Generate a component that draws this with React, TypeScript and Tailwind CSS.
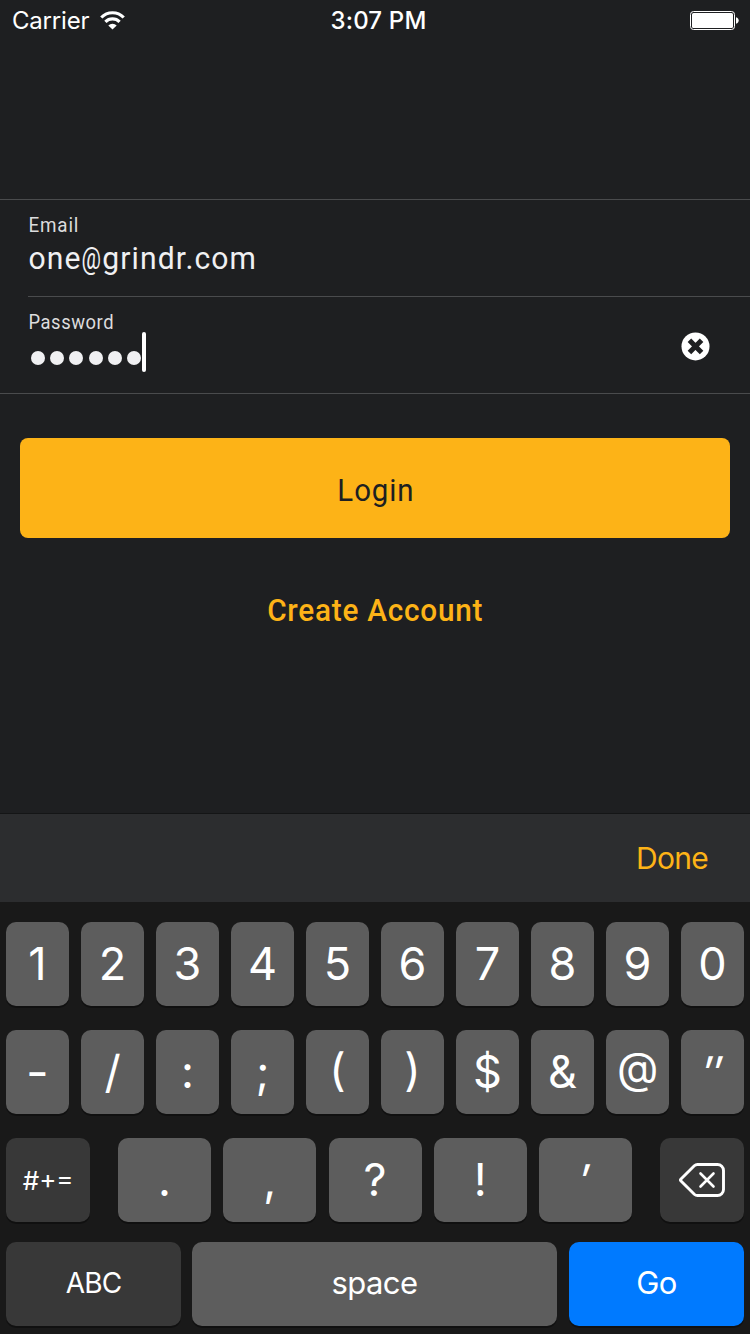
import React from "react";

type KeyProps = {
  children: React.ReactNode;
  box: string;
  glyph?: string;
};

function Key({ children, box, glyph = "" }: KeyProps) {
  return (
    <button
      type="button"
      className={`flex h-[84px] shrink-0 items-center justify-center rounded-[10px] text-white shadow-[0_2px_0_#101010] ${box}`}
    >
      <span className={`block whitespace-pre ${glyph}`}>{children}</span>
    </button>
  );
}

const LIGHT = "bg-[#5d5d5d]";
const DARK = "bg-[#383838]";
const CHAR = "text-[45px] leading-[84px]";
const RAISED = "[font-feature-settings:'case']";

const digits = ["1", "2", "3", "4", "5", "6", "7", "8", "9", "0"];

const symbols = [
  { char: "-", style: "scale-x-110" },
  { char: "/", style: RAISED },
  { char: ":", style: "" },
  { char: ";", style: "" },
  { char: "(", style: RAISED },
  { char: ")", style: RAISED },
  { char: "$", style: "" },
  { char: "&", style: "" },
  { char: "@", style: `scale-95 pt-px ${RAISED}` },
  { char: "″", style: "-skew-x-8 pt-px" },
];

function WifiIcon() {
  return (
    <svg width="25" height="19" viewBox="0 0 25 19" fill="none" stroke="#fff" strokeWidth="3.2">
      <path d="M1.3 6.5A15.6 15.6 0 0 1 23.7 6.5" />
      <path d="M5.4 10.9A10 10 0 0 1 19.6 10.9" />
      <path d="M8.3 14.4A6 6 0 0 1 16.7 14.4L12.5 18.6Z" fill="#fff" stroke="none" />
    </svg>
  );
}

function BatteryIcon() {
  return (
    <svg width="49" height="19" viewBox="0 0 49 19">
      <rect x="0.5" y="0.5" width="44" height="18" rx="3" fill="none" stroke="#fff" />
      <rect x="2" y="2" width="41" height="15" rx="1.5" fill="#fff" />
      <path d="M46 6.2C49.6 7.2 49.6 11.8 46 12.8Z" fill="#fff" />
    </svg>
  );
}

function ClearIcon() {
  return (
    <svg width="30" height="30" viewBox="0 0 30 30">
      <circle cx="14.5" cy="14.4" r="14" fill="#fff" />
      <path d="M10.2 10.1L18.8 18.7M18.8 10.1L10.2 18.7" stroke="#1e1f21" strokeWidth="5" strokeLinecap="square" />
    </svg>
  );
}

function BackspaceIcon() {
  return (
    <svg width="46" height="34" viewBox="0 0 46 34" fill="none" stroke="#fff" strokeLinecap="round" strokeLinejoin="round">
      <path
        d="M18.5 1.5H38.5A6 6 0 0 1 44.5 7.5V26.5A6 6 0 0 1 38.5 32.5H18.5Q16.7 32.5 15.3 31.2L2 18Q1 17 2 16L15.3 2.8Q16.7 1.5 18.5 1.5Z"
        strokeWidth="2.9"
      />
      <path d="M21.5 10.5L34.5 23.5M34.5 10.5L21.5 23.5" strokeWidth="2.6" />
    </svg>
  );
}

export default function App() {
  return (
    <div className="flex h-[1334px] w-[750px] flex-col overflow-hidden bg-[#1e1f21] font-['Inter',sans-serif]">
      <header className="grid h-10 grid-cols-3 grid-rows-[40px] items-center text-[24px] leading-[38px] text-white">
        <div className="flex items-center gap-[11px] pl-3">
          <span className="pt-[2px] tracking-[-0.2px]">Carrier</span>
          <WifiIcon />
        </div>
        <div className="pt-[2px] pl-[7px] text-center font-medium tracking-[0.2px]">3:07 PM</div>
        <div className="flex justify-end pr-[11px]">
          <BatteryIcon />
        </div>
      </header>

      <section className="mt-[159px] h-[195px] border-y border-[#4a4b4d] font-['Roboto',sans-serif] text-[#f0f0f2]">
        <div className="ml-7 h-[97px] border-b border-[#4a4b4d] pt-[13px]">
          <div className="w-fit origin-left scale-x-94 pl-[0.5px] text-[20px] leading-6 tracking-[0.9px] text-[#dcdcde]">Email</div>
          <div className="w-fit origin-left scale-x-94 pl-[0.5px] text-[32px] leading-[42px] tracking-[1.2px]">
            one<span className="inline-block w-[22px] origin-left scale-x-[0.72]">@</span>grindr.com
          </div>
        </div>
        <div className="ml-7 flex h-24 justify-between">
          <div className="pt-[13px]">
            <div className="w-fit origin-left scale-x-92 pl-[0.5px] text-[20px] leading-6 tracking-[0.6px] text-[#dcdcde]">Password</div>
            <div className="-mt-[2px] flex items-center pl-[2.5px]">
              <div className="flex gap-[5.4px] pt-3">
                {[0, 1, 2, 3, 4, 5].map((dot) => (
                  <span key={dot} className="size-[14px] rounded-full bg-[#f0f0f2]" />
                ))}
              </div>
              <div className="ml-[0.5px] h-10 w-1 rounded-[2px] bg-white" />
            </div>
          </div>
          <div className="pt-[35px] pr-[39px]">
            <ClearIcon />
          </div>
        </div>
      </section>

      <div className="mx-5 mt-[44px] flex h-[100px] justify-center rounded-[8px] bg-[#fdb317] pl-px font-['Roboto',sans-serif] text-[32px] leading-[105px] text-[#1e1f21]">
        <span className="scale-x-92 tracking-[1px]">Login</span>
      </div>
      <div className="mt-[50px] flex h-[44px] justify-center font-['Roboto',sans-serif] text-[32px] leading-[44px] font-medium text-[#fdb317]">
        <span className="scale-x-93 tracking-[0.8px]">Create Account</span>
      </div>

      <section className="mt-auto flex h-[521px] shrink-0 flex-col border-t border-[#141516] bg-[#191919]">
        <div className="flex h-[88px] items-center justify-end bg-[#2c2d2f] pr-[42px] text-[30px] leading-[88px] tracking-[-0.7px] text-[#fdb317]">
          <span>Done</span>
        </div>
        <div className="mt-5 flex gap-3 px-[6px]">
          {digits.map((digit) => (
            <Key key={digit} box={`w-[63px] ${LIGHT}`} glyph={CHAR}>
              {digit}
            </Key>
          ))}
        </div>
        <div className="mt-6 flex gap-3 px-[6px]">
          {symbols.map(({ char, style }) => (
            <Key key={char} box={`w-[63px] ${LIGHT}`} glyph={`${CHAR} ${style}`}>
              {char}
            </Key>
          ))}
        </div>
        <div className="mt-6 flex justify-between px-[6px]">
          <Key box={`w-[84px] ${DARK}`} glyph={`text-[26px] leading-[84px] pt-px tracking-[-0.2px] ${RAISED}`}>#+=</Key>
          <div className="flex gap-[12.25px]">
            <Key box={`w-[93px] ${LIGHT}`} glyph={CHAR}>.</Key>
            <Key box={`w-[93px] ${LIGHT}`} glyph={CHAR}>,</Key>
            <Key box={`w-[93px] ${LIGHT}`} glyph={CHAR}>?</Key>
            <Key box={`w-[93px] ${LIGHT}`} glyph={CHAR}>!</Key>
            <Key box={`w-[93px] ${LIGHT}`} glyph={`${CHAR} -skew-x-8 pt-px`}>′</Key>
          </div>
          <Key box={`w-[84px] ${DARK}`}>
            <BackspaceIcon />
          </Key>
        </div>
        <div className="mt-5 flex px-[6px]">
          <Key box={`w-[175px] mr-[11px] ${DARK}`} glyph="text-[28px] leading-[82px] pb-[2px] tracking-[-0.8px]">ABC</Key>
          <Key box={`w-[365px] mr-3 ${LIGHT}`} glyph="text-[31px] leading-[82px] pb-[2px] tracking-[-0.6px]">space</Key>
          <Key box="w-[175px] bg-[#007aff]" glyph="text-[31px] leading-[82px] pb-[2px] tracking-[-0.6px]">Go</Key>
        </div>
      </section>
    </div>
  );
}
